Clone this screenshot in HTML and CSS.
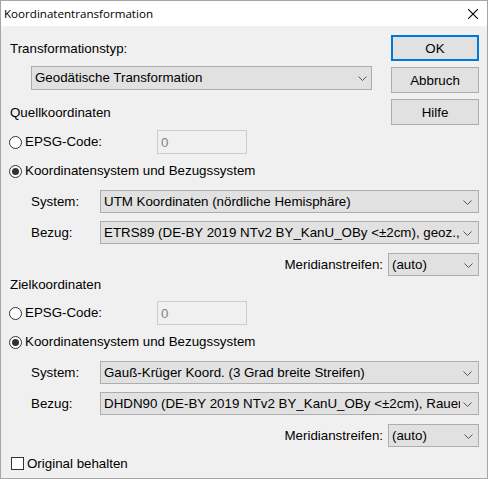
FILE: index.html
```html
<!DOCTYPE html>
<html lang="de">
<head>
<meta charset="utf-8">
<title>Koordinatentransformation</title>
<link rel="stylesheet" href="styles.css">
</head>
<body>
<div class="dialog">
  <div class="titlebar">
    <span class="title">Koordinatentransformation</span>
    <svg class="close" width="10" height="10" viewBox="0 0 10 10" aria-hidden="true">
      <path d="M0 0 L10 10 M10 0 L0 10" stroke="#000" stroke-width="1.1" fill="none"/>
    </svg>
  </div>

  <div class="content">
    <div class="top">
      <div class="top-main">
        <div class="label typ-label">Transformationstyp:</div>
        <div class="combo typ-combo">
          <span class="combo-text">Geodätische Transformation</span>
          <svg class="chev" width="9" height="5" viewBox="0 0 9 5"><path d="M0.5 0.5 L4.5 4.5 L8.5 0.5" fill="none" stroke="#555" stroke-width="1"/></svg>
        </div>
        <div class="label group-label first">Quellkoordinaten</div>
      </div>
      <div class="buttons">
        <button class="btn default">OK</button>
        <button class="btn">Abbruch</button>
        <button class="btn">Hilfe</button>
      </div>
    </div>

    <div class="group">
      <div class="row epsg-row">
        <span class="radio"></span>
        <span class="label epsg-label">EPSG-Code:</span>
        <span class="field disabled">0</span>
      </div>
      <div class="row radio-row">
        <span class="radio checked"></span>
        <span class="label">Koordinatensystem und Bezugssystem</span>
      </div>
      <div class="row combo-row sys-row">
        <span class="label side-label">System:</span>
        <div class="combo grow">
          <span class="combo-text">UTM Koordinaten (nördliche Hemisphäre)</span>
          <svg class="chev" width="9" height="5" viewBox="0 0 9 5"><path d="M0.5 0.5 L4.5 4.5 L8.5 0.5" fill="none" stroke="#555" stroke-width="1"/></svg>
        </div>
      </div>
      <div class="row combo-row">
        <span class="label side-label">Bezug:</span>
        <div class="combo grow">
          <span class="combo-text">ETRS89 (DE-BY 2019 NTv2 BY_KanU_OBy &lt;±2cm), geoz., (B/L)</span>
          <svg class="chev" width="9" height="5" viewBox="0 0 9 5"><path d="M0.5 0.5 L4.5 4.5 L8.5 0.5" fill="none" stroke="#555" stroke-width="1"/></svg>
        </div>
      </div>
      <div class="row combo-row meridian-row">
        <span class="label">Meridianstreifen:</span>
        <div class="combo small">
          <span class="combo-text">(auto)</span>
          <svg class="chev" width="9" height="5" viewBox="0 0 9 5"><path d="M0.5 0.5 L4.5 4.5 L8.5 0.5" fill="none" stroke="#555" stroke-width="1"/></svg>
        </div>
      </div>
    </div>

    <div class="label group-label second">Zielkoordinaten</div>

    <div class="group">
      <div class="row epsg-row">
        <span class="radio"></span>
        <span class="label epsg-label">EPSG-Code:</span>
        <span class="field disabled">0</span>
      </div>
      <div class="row radio-row">
        <span class="radio checked"></span>
        <span class="label">Koordinatensystem und Bezugssystem</span>
      </div>
      <div class="row combo-row sys-row">
        <span class="label side-label">System:</span>
        <div class="combo grow">
          <span class="combo-text">Gauß-Krüger Koord. (3 Grad breite Streifen)</span>
          <svg class="chev" width="9" height="5" viewBox="0 0 9 5"><path d="M0.5 0.5 L4.5 4.5 L8.5 0.5" fill="none" stroke="#555" stroke-width="1"/></svg>
        </div>
      </div>
      <div class="row combo-row">
        <span class="label side-label">Bezug:</span>
        <div class="combo grow">
          <span class="combo-text">DHDN90 (DE-BY 2019 NTv2 BY_KanU_OBy &lt;±2cm), Rauenberg</span>
          <svg class="chev" width="9" height="5" viewBox="0 0 9 5"><path d="M0.5 0.5 L4.5 4.5 L8.5 0.5" fill="none" stroke="#555" stroke-width="1"/></svg>
        </div>
      </div>
      <div class="row combo-row meridian-row">
        <span class="label">Meridianstreifen:</span>
        <div class="combo small">
          <span class="combo-text">(auto)</span>
          <svg class="chev" width="9" height="5" viewBox="0 0 9 5"><path d="M0.5 0.5 L4.5 4.5 L8.5 0.5" fill="none" stroke="#555" stroke-width="1"/></svg>
        </div>
      </div>
    </div>

    <div class="row check-row">
      <span class="checkbox"></span>
      <span class="label">Original behalten</span>
    </div>
  </div>
</div>
</body>
</html>
```

FILE: styles.css
```css
* {
  box-sizing: border-box;
}

html, body {
  margin: 0;
  padding: 0;
  background: #f0f0f0;
}

.dialog {
  width: 488px;
  height: 479px;
  border: 1px solid #a6a6a6;
  background: #f0f0f0;
  font-family: "Liberation Sans", Arial, sans-serif;
  font-size: 13.33px;
  color: #000;
  overflow: hidden;
}

/* window caption */
.titlebar {
  height: 25px;
  background: #fff;
  display: flex;
  align-items: center;
  padding: 0 9px 0 3px;
}

.title {
  font-family: "Open Sans", "Noto Sans", sans-serif;
  font-size: 11.6px;
  line-height: 16px;
  margin-top: 1px;
}

.close {
  margin-left: auto;
  margin-top: 1px;
}

/* client area */
.content {
  padding: 9px 8px 0 7px;
  display: flex;
  flex-direction: column;
}

.label {
  line-height: 16px;
  white-space: nowrap;
  flex: none;
}

.top {
  display: flex;
  align-items: flex-start;
}

.top-main {
  flex: 1;
  display: flex;
  flex-direction: column;
}

.typ-label {
  margin: 6px 0 0 2px;
}

.group-label {
  margin-left: 2px;
}

.group-label.first {
  margin-top: 15px;
}

.group-label.second {
  margin-top: 1px;
}

.buttons {
  display: flex;
  flex-direction: column;
  gap: 6px;
  width: 88px;
  margin-left: 18px;
}

.btn {
  height: 26px;
  width: 88px;
  border: 1px solid #adadad;
  background: #e1e1e1;
  font: inherit;
  color: #000;
  padding: 0;
}

.btn.default {
  border: 2px solid #0078d7;
}

/* combo boxes */
.combo {
  height: 23px;
  border: 1px solid #adadad;
  background: #e1e1e1;
  display: flex;
  align-items: center;
  padding: 0 5px 0 3px;
  min-width: 0;
}

.combo-text {
  flex: 1;
  min-width: 0;
  overflow: hidden;
  white-space: nowrap;
  line-height: 16px;
  margin-right: 3px;
}

.chev {
  flex: none;
  margin-top: 1px;
}

.typ-combo {
  height: 24px;
  margin: 9px 0 0 23px;
  width: 341px;
  padding-right: 4px;
}

.group {
  display: flex;
  flex-direction: column;
}

.row {
  display: flex;
  align-items: center;
}

.epsg-row {
  height: 24px;
  margin-top: 5px;
}

.group-label.second + .group .epsg-row {
  margin-top: 8px;
}

.radio {
  width: 13px;
  height: 13px;
  flex: none;
  border: 1px solid #333;
  border-radius: 50%;
  background: #fff;
  margin-left: 1px;
  margin-right: 3px;
  display: flex;
  align-items: center;
  justify-content: center;
}

.radio.checked::after {
  content: "";
  width: 7px;
  height: 7px;
  border-radius: 50%;
  background: #333;
}

.epsg-label {
  width: 132px;
}

.field {
  width: 90px;
  height: 24px;
  border: 1px solid #ccc;
  display: flex;
  align-items: center;
  padding-left: 3px;
}

.field.disabled {
  background: #f0f0f0;
  color: #838383;
}

.radio-row {
  height: 18px;
  margin-top: 8px;
}

.combo-row {
  margin-top: 8px;
}

.sys-row {
  margin-top: 10px;
}

.side-label {
  width: 69px;
  margin-left: 23px;
}

.combo.grow {
  flex: 1 1 0;
  padding-right: 6px;
}

.meridian-row {
  justify-content: flex-end;
  margin-top: 9px;
}

.meridian-row .label {
  margin-right: 5px;
}

.combo.small {
  width: 91px;
}

.check-row {
  height: 17px;
  margin-top: 8px;
}

.checkbox {
  width: 13px;
  height: 13px;
  flex: none;
  border: 1px solid #333;
  background: #fff;
  margin-left: 3px;
  margin-right: 3px;
}
```
